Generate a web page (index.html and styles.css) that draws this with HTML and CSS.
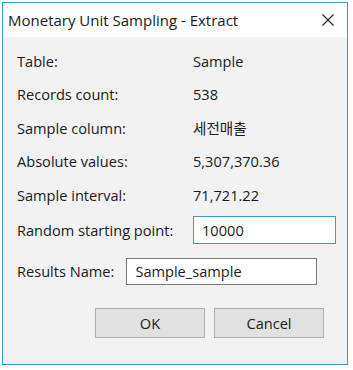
FILE: index.html
```html
<!DOCTYPE html>
<html>
<head>
<meta charset="utf-8">
<link rel="stylesheet" href="styles.css">
</head>
<body>
<div class="window">
  <div class="titlebar">
    <span class="title">Monetary Unit Sampling - Extract</span>
    <svg class="close" width="12" height="12" viewBox="0 0 12 12"><path d="M0.5 0.5 L11.5 11.5 M11.5 0.5 L0.5 11.5" stroke="#222" stroke-width="1.1" fill="none"/></svg>
  </div>
  <div class="content">
    <div class="grid">
      <div class="row"><span class="label">Table:</span><span class="value">Sample</span></div>
      <div class="row"><span class="label">Records count:</span><span class="value">538</span></div>
      <div class="row"><span class="label">Sample column:</span><span class="value">세전매출</span></div>
      <div class="row"><span class="label">Absolute values:</span><span class="value">5,307,370.36</span></div>
      <div class="row"><span class="label">Sample interval:</span><span class="value">71,721.22</span></div>
      <div class="row row-input"><span class="label">Random starting point:</span><span class="input focused">10000</span></div>
    </div>
    <div class="results">
      <span class="label">Results Name:</span><span class="input name">Sample_sample</span>
    </div>
    <div class="buttons">
      <span class="btn">OK</span>
      <span class="btn">Cancel</span>
    </div>
  </div>
</div>
</body>
</html>
```
FILE: styles.css
```css
html, body {
  margin: 0;
  padding: 0;
  background: #ffffff;
}
body {
  font-family: "Open Sans", "Noto Sans CJK KR", sans-serif;
  font-size: 14.6px;
  color: #1a1a1a;
}
.window {
  margin: 2px 0 0 2px;
  width: 346px;
  height: 363px;
  border: 1px solid #3d94dc;
  box-sizing: border-box;
  background: #f2f2f2;
  display: flex;
  flex-direction: column;
}
.titlebar {
  height: 34px;
  background: #ffffff;
  display: flex;
  align-items: center;
  justify-content: space-between;
  padding: 0 13px 0 5px;
  flex-shrink: 0;
}
.title {
  font-size: 15px;
  color: #1a1a1a;
}
.content {
  padding: 7px 0 0 14px;
  display: flex;
  flex-direction: column;
}
.grid {
  display: flex;
  flex-direction: column;
}
.row {
  display: flex;
  align-items: center;
  height: 33.5px;
}
.row-input {
  height: 36px;
}
.label {
  width: 176px;
  flex-shrink: 0;
}
.input {
  box-sizing: border-box;
  height: 28px;
  background: #ffffff;
  display: flex;
  align-items: center;
  padding-left: 8px;
}
.focused {
  width: 143px;
  border: 1px solid #3f96dc;
}
.results {
  display: flex;
  align-items: center;
  margin-top: 10px;
}
.results .label {
  width: auto;
  margin-right: 12px;
}
.name {
  width: 191px;
  height: 27px;
  border: 1px solid #7a7a7a;
}
.buttons {
  display: flex;
  gap: 9px;
  margin-top: 23px;
  padding-left: 78px;
}
.btn {
  box-sizing: border-box;
  width: 110px;
  height: 30px;
  background: #e1e1e1;
  border: 1px solid #adadad;
  display: flex;
  align-items: center;
  justify-content: center;
}
```
